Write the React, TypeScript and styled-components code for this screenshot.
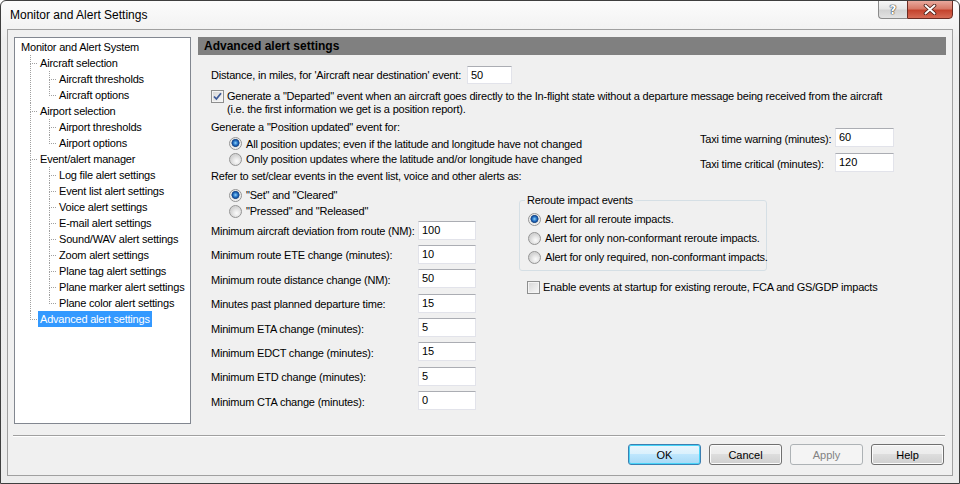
import React from 'react';
import styled, { createGlobalStyle, css } from 'styled-components';

const GlobalStyle = createGlobalStyle`
  html, body {
    margin: 0;
    padding: 0;
    background: #ffffff;
  }
  body {
    font-family: "Liberation Sans", Arial, sans-serif;
    font-size: 11px;
    letter-spacing: -0.2px;
    color: #000000;
  }
`;

const Window = styled.div`
  width: 960px;
  height: 484px;
  box-sizing: border-box;
  border: 1px solid #3f3f3f;
  border-radius: 6px 6px 0 0;
  background: linear-gradient(#fcfcfc, #eeeeee 40px, #ececec);
  display: flex;
  flex-direction: column;
  overflow: hidden;
`;

const TitleBar = styled.div`
  height: 28px;
  flex: none;
  display: flex;
  align-items: flex-start;
`;

const Title = styled.div`
  flex: 1;
  padding-left: 9px;
  line-height: 28px;
  font-size: 12px;
  letter-spacing: 0;
`;

const CaptionButtons = styled.div`
  display: flex;
  margin: -1px 6px 0 0;
`;

const CaptionButton = styled.div<{ $close?: boolean }>`
  height: 19px;
  box-sizing: border-box;
  display: flex;
  align-items: center;
  justify-content: center;
  ${(p) =>
    p.$close
      ? css`
          width: 46px;
          border: 1px solid #6b2b22;
          border-radius: 0 0 4px 0;
          background: linear-gradient(#e9a99d, #d77a68 45%, #c4432d 55%, #d66b55);
        `
      : css`
          width: 29px;
          border: 1px solid #8a8a8a;
          border-right: none;
          border-radius: 0 0 0 4px;
          background: linear-gradient(#f7f7f7, #e6e6e6 45%, #d2d2d2 55%, #e2e2e2);
        `}
`;

const HelpGlyph = styled.span`
  font-family: "DejaVu Sans", sans-serif;
  font-weight: bold;
  font-size: 12px;
  color: #ffffff;
  text-shadow: 0 0 1px #333, 0 0 1px #333, 0 0 1px #333;
`;

const Client = styled.div`
  flex: 1;
  margin: 0 6px 7px 6px;
  border: 1px solid #a0a0a0;
  background: #f0f0f0;
  display: flex;
  flex-direction: column;
`;

const Main = styled.div`
  display: flex;
  gap: 7px;
  padding: 7px 6px 0 6px;
`;

const TreeBox = styled.div`
  width: 177px;
  height: 387px;
  flex: none;
  box-sizing: border-box;
  border: 1px solid #828790;
  background: #ffffff;
  padding: 1px 0 0 4px;
`;

const Group = styled.ul<{ $root?: boolean }>`
  margin: 0;
  padding: 0 0 0 ${(p) => (p.$root ? 0 : 19)}px;
`;

const Node = styled.li<{ $depth: number }>`
  position: relative;
  list-style: none;
  ${(p) =>
    p.$depth > 0 &&
    css`
      &::before {
        content: '';
        position: absolute;
        left: -8px;
        top: 0;
        width: 6px;
        height: 8px;
        border-left: 1px dotted #a0a0a0;
        border-bottom: 1px dotted #a0a0a0;
      }
      &:not(:last-child)::after {
        content: '';
        position: absolute;
        left: -8px;
        top: 9px;
        bottom: 0;
        border-left: 1px dotted #a0a0a0;
      }
    `}
`;

const NodeLabel = styled.span<{ $selected?: boolean }>`
  display: inline-block;
  height: 16px;
  line-height: 16px;
  padding: 0 2px;
  white-space: nowrap;
  background: ${(p) => (p.$selected ? '#3399ff' : 'transparent')};
  color: ${(p) => (p.$selected ? '#ffffff' : '#000000')};
`;

const Panel = styled.div`
  flex: 1;
  display: flex;
  flex-direction: column;
`;

const PanelHeader = styled.div`
  height: 18px;
  line-height: 18px;
  background: #808080;
  padding-left: 6px;
  font-weight: bold;
  font-size: 12px;
  letter-spacing: 0;
`;

const PanelBody = styled.div`
  padding-left: 13px;
  display: flex;
  flex-direction: column;
`;

const InlineRow = styled.div<{ $top?: number }>`
  display: flex;
  align-items: center;
  gap: 6px;
  margin-top: ${(p) => p.$top ?? 0}px;
  white-space: nowrap;
`;

const Line = styled.div<{ $top?: number }>`
  line-height: 13px;
  white-space: nowrap;
  margin-top: ${(p) => p.$top ?? 0}px;
`;

const TextBox = styled.div<{ $w: number; $h: number }>`
  width: ${(p) => p.$w}px;
  height: ${(p) => p.$h}px;
  flex: none;
  box-sizing: border-box;
  border: 1px solid #e2e3ea;
  border-top-color: #abadb3;
  background: #ffffff;
  padding-left: 3px;
  line-height: ${(p) => p.$h - 2}px;
  letter-spacing: 0;
`;

const CheckRow = styled.div<{ $top?: number; $left?: number }>`
  display: flex;
  align-items: flex-start;
  gap: 3px;
  margin-top: ${(p) => p.$top ?? 0}px;
  margin-left: ${(p) => p.$left ?? 0}px;
  line-height: 13px;
  white-space: nowrap;
`;

const CheckBox = styled.span`
  width: 13px;
  height: 13px;
  flex: none;
  box-sizing: border-box;
  border: 1px solid #8e8f8f;
  box-shadow: inset 0 0 0 1px #f4f4f4;
  background: linear-gradient(135deg, #d6d6d6, #f8f8f8);
  display: flex;
  align-items: center;
  justify-content: center;
`;

const RadioList = styled.div<{ $top?: number; $left?: number }>`
  display: flex;
  flex-direction: column;
  margin-top: ${(p) => p.$top ?? 0}px;
  margin-left: ${(p) => p.$left ?? 0}px;
`;

const RadioRow = styled.div<{ $h: number }>`
  height: ${(p) => p.$h}px;
  display: flex;
  align-items: center;
  gap: 4px;
  white-space: nowrap;
`;

const RadioDot = styled.span<{ $on?: boolean }>`
  width: 13px;
  height: 13px;
  flex: none;
  box-sizing: border-box;
  border-radius: 50%;
  border: 1px solid #949494;
  background: ${(p) =>
    p.$on
      ? 'radial-gradient(circle at 50% 45%, #9ad6f8 0, #3f8fd8 1.5px, #0f4a9c 3.2px, #3a5f8c 3.8px, #e4e4e4 4.3px, #f6f6f6 6px)'
      : 'radial-gradient(circle at 60% 65%, #fbfbfb 0, #e9e9e9 3px, #d4d4d4 6px)'};
`;

const MiddleRow = styled.div`
  display: flex;
  margin-top: 5px;
`;

const LeftCol = styled.div<{ $w: number }>`
  width: ${(p) => p.$w}px;
  flex: none;
  display: flex;
  flex-direction: column;
`;

const TaxiCol = styled.div`
  display: flex;
  flex-direction: column;
  gap: 6px;
  margin: 7.5px 0 -3px 0;
`;

const FieldRow = styled.div<{ $label: number }>`
  display: flex;
  align-items: center;
  white-space: nowrap;
  & > span {
    width: ${(p) => p.$label}px;
    flex: none;
    padding-top: 2px;
  }
`;

const BottomRow = styled.div`
  display: flex;
  margin-top: 4.5px;
`;

const NumberRows = styled.div`
  display: flex;
  flex-direction: column;
  gap: 5.4px;
  margin-top: 1.5px;
`;

const RightCol = styled.div`
  margin-left: 43px;
  display: flex;
  flex-direction: column;
`;

const GroupBox = styled.fieldset`
  width: 248px;
  box-sizing: border-box;
  margin: 6.5px 0 0 0;
  padding: 0 0 3px 8px;
  border: 1px solid #d5dfe5;
  border-radius: 3px;
  min-width: 0;
`;

const GroupTitle = styled.legend`
  padding: 0 2px;
  margin-left: -3px;
  line-height: 13px;
`;

const Separator = styled.div`
  margin: 11px 7px 0 5px;
  border-top: 1px solid #a0a0a0;
  border-bottom: 1px solid #ffffff;
`;

const ButtonBar = styled.div`
  display: flex;
  justify-content: flex-end;
  gap: 8px;
  margin: 7px 8px 0 0;
`;

const DialogButton = styled.div<{ $default?: boolean; $disabled?: boolean }>`
  width: 73px;
  height: 21px;
  box-sizing: border-box;
  border-radius: 3px;
  display: flex;
  align-items: center;
  justify-content: center;
  letter-spacing: 0;
  border: 1px solid #707070;
  background: linear-gradient(#f2f2f2, #ebebeb 50%, #dddddd 50%, #cfcfcf);
  box-shadow: inset 0 0 0 1px #fbfbfb;
  ${(p) =>
    p.$default &&
    css`
      border-color: #3c7fb1;
      box-shadow: inset 0 0 0 1px #48d4f8;
      background: linear-gradient(#eaf6fd, #d9f0fc 50%, #bee6fd 50%, #a7d9f5);
    `}
  ${(p) =>
    p.$disabled &&
    css`
      border-color: #adb2b5;
      background: #f4f4f4;
      box-shadow: none;
      color: #838383;
    `}
`;

type TreeItem = { label: string; selected?: boolean; children?: TreeItem[] };

const tree: TreeItem[] = [
  {
    label: 'Monitor and Alert System',
    children: [
      {
        label: 'Aircraft selection',
        children: [{ label: 'Aircraft thresholds' }, { label: 'Aircraft options' }],
      },
      {
        label: 'Airport selection',
        children: [{ label: 'Airport thresholds' }, { label: 'Airport options' }],
      },
      {
        label: 'Event/alert manager',
        children: [
          { label: 'Log file alert settings' },
          { label: 'Event list alert settings' },
          { label: 'Voice alert settings' },
          { label: 'E-mail alert settings' },
          { label: 'Sound/WAV alert settings' },
          { label: 'Zoom alert settings' },
          { label: 'Plane tag alert settings' },
          { label: 'Plane marker alert settings' },
          { label: 'Plane color alert settings' },
        ],
      },
      { label: 'Advanced alert settings', selected: true },
    ],
  },
];

const TreeNodes = ({ items, depth }: { items: TreeItem[]; depth: number }) => (
  <Group $root={depth === 0}>
    {items.map((item) => (
      <Node key={item.label} $depth={depth}>
        <NodeLabel $selected={item.selected}>{item.label}</NodeLabel>
        {item.children && <TreeNodes items={item.children} depth={depth + 1} />}
      </Node>
    ))}
  </Group>
);

const Check = ({ checked }: { checked?: boolean }) => (
  <CheckBox>
    {checked && (
      <svg width="9" height="9" viewBox="0 0 9 9">
        <path d="M1 4.5 L3.4 7 L8 1.2" fill="none" stroke="#3d5a98" strokeWidth="1.8" />
      </svg>
    )}
  </CheckBox>
);

const Radio = ({ on, h, children }: { on?: boolean; h: number; children: React.ReactNode }) => (
  <RadioRow $h={h}>
    <RadioDot $on={on} />
    <span>{children}</span>
  </RadioRow>
);

const numberFields = [
  ['Minimum aircraft deviation from route (NM):', '100'],
  ['Minimum route ETE change (minutes):', '10'],
  ['Minimum route distance change (NM):', '50'],
  ['Minutes past planned departure time:', '15'],
  ['Minimum ETA change (minutes):', '5'],
  ['Minimum EDCT change (minutes):', '15'],
  ['Minimum ETD change (minutes):', '5'],
  ['Minimum CTA change (minutes):', '0'],
];

export default function App() {
  return (
    <>
      <GlobalStyle />
      <Window>
        <TitleBar>
          <Title>Monitor and Alert Settings</Title>
          <CaptionButtons>
            <CaptionButton>
              <HelpGlyph>?</HelpGlyph>
            </CaptionButton>
            <CaptionButton $close>
              <svg width="14" height="11" viewBox="0 0 14 11">
                <path d="M2.5 1.5 L11.5 9.5 M11.5 1.5 L2.5 9.5" stroke="#4a1d15" strokeWidth="3.6" strokeLinecap="round" />
                <path d="M2.5 1.5 L11.5 9.5 M11.5 1.5 L2.5 9.5" stroke="#ffffff" strokeWidth="1.9" strokeLinecap="round" />
              </svg>
            </CaptionButton>
          </CaptionButtons>
        </TitleBar>
        <Client>
          <Main>
            <TreeBox>
              <TreeNodes items={tree} depth={0} />
            </TreeBox>
            <Panel>
              <PanelHeader>Advanced alert settings</PanelHeader>
              <PanelBody>
                <InlineRow $top={11}>
                  <span>Distance, in miles, for 'Aircraft near destination' event:</span>
                  <TextBox $w={45} $h={18}>50</TextBox>
                </InlineRow>
                <CheckRow $top={5.5}>
                  <Check checked />
                  <span>
                    Generate a "Departed" event when an aircraft goes directly to the In-flight state without a departure message being received from the aircraft
                    <br />
                    (i.e. the first information we get is a position report).
                  </span>
                </CheckRow>
                <MiddleRow>
                  <LeftCol $w={489}>
                    <Line>Generate a "Position updated" event for:</Line>
                    <RadioList $top={2.5} $left={18}>
                      <Radio on h={15.5}>All position updates; even if the latitude and longitude have not changed</Radio>
                      <Radio h={15.5}>Only position updates where the latitude and/or longitude have changed</Radio>
                    </RadioList>
                  </LeftCol>
                  <TaxiCol>
                    <FieldRow $label={135}>
                      <span>Taxi time warning (minutes):</span>
                      <TextBox $w={59} $h={19}>60</TextBox>
                    </FieldRow>
                    <FieldRow $label={135}>
                      <span>Taxi time critical (minutes):</span>
                      <TextBox $w={59} $h={19}>120</TextBox>
                    </FieldRow>
                  </TaxiCol>
                </MiddleRow>
                <Line $top={0.5}>Refer to set/clear events in the event list, voice and other alerts as:</Line>
                <BottomRow>
                  <LeftCol $w={265}>
                    <RadioList $left={18}>
                      <Radio on h={16}>"Set" and "Cleared"</Radio>
                      <Radio h={16}>"Pressed" and "Released"</Radio>
                    </RadioList>
                    <NumberRows>
                      {numberFields.map(([label, value]) => (
                        <FieldRow key={label} $label={207}>
                          <span>{label}</span>
                          <TextBox $w={58} $h={19}>{value}</TextBox>
                        </FieldRow>
                      ))}
                    </NumberRows>
                  </LeftCol>
                  <RightCol>
                    <GroupBox>
                      <GroupTitle>Reroute impact events</GroupTitle>
                      <RadioList $top={3}>
                        <Radio on h={19}>Alert for all reroute impacts.</Radio>
                        <Radio h={19}>Alert for only non-conformant reroute impacts.</Radio>
                        <Radio h={19}>Alert for only required, non-conformant impacts.</Radio>
                      </RadioList>
                    </GroupBox>
                    <CheckRow $top={10.5} $left={8}>
                      <Check />
                      <span>Enable events at startup for existing reroute, FCA and GS/GDP impacts</span>
                    </CheckRow>
                  </RightCol>
                </BottomRow>
              </PanelBody>
            </Panel>
          </Main>
          <Separator />
          <ButtonBar>
            <DialogButton $default>OK</DialogButton>
            <DialogButton>Cancel</DialogButton>
            <DialogButton $disabled>Apply</DialogButton>
            <DialogButton>Help</DialogButton>
          </ButtonBar>
        </Client>
      </Window>
    </>
  );
}
